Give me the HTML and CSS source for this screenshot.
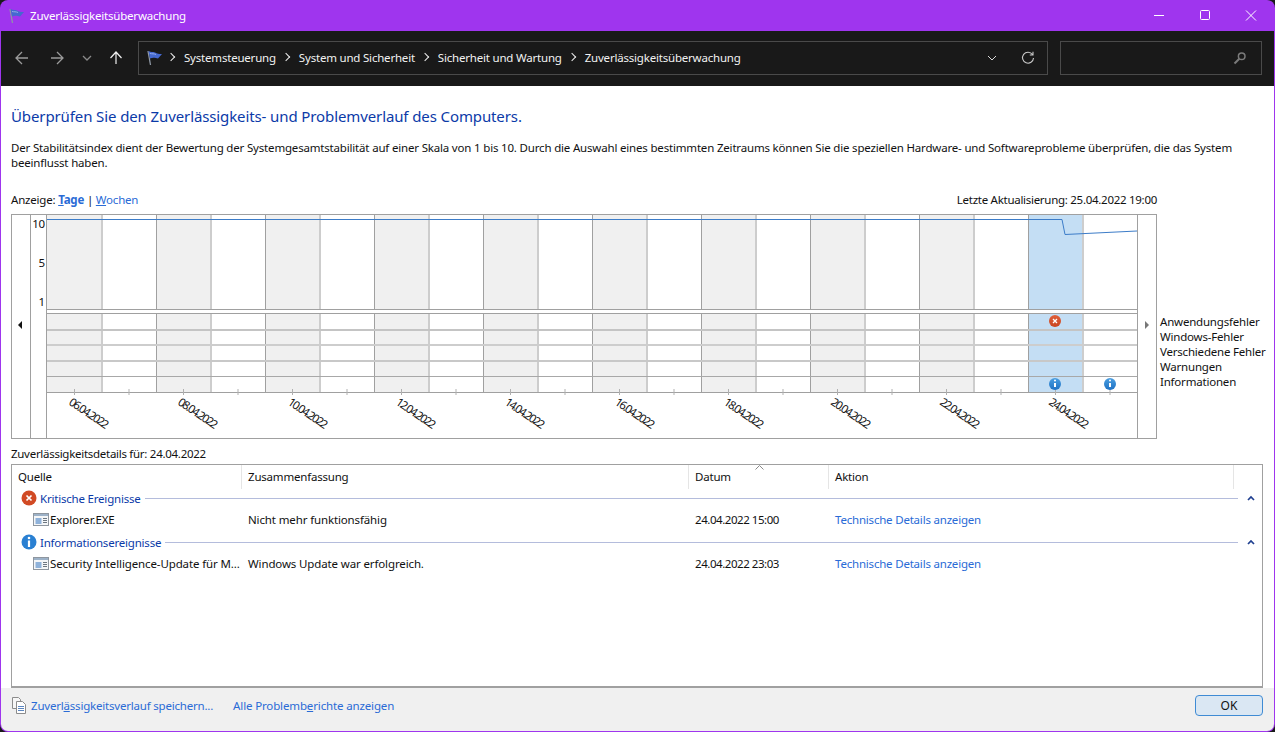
FILE: index.html
```html
<!DOCTYPE html>
<html lang="de">
<head>
<meta charset="utf-8">
<title>Zuverlässigkeitsüberwachung</title>
<link rel="stylesheet" href="styles.css">
</head>
<body>
<div class="window">
  <header class="titlebar">
    <svg class="flag" width="16" height="16" viewBox="0 0 16 16"><path d="M1 1 3.500 15" stroke="#8f98a4" stroke-width="1.300" fill="none"/><path d="M1.500 1C4 2.500 6 1.500 8 2.500 10 3.500 12 4 15 4L11 8.500C9 8.500 7 7 3 8.500Z" fill="#4468d0"/><path d="M3 3.500C5 4 7 3.500 9 4.500" stroke="#93a9ea" fill="none"/></svg>
    <span class="title-text">Zuverlässigkeitsüberwachung</span>
    <div class="win-controls">
      <svg width="46" height="31" viewBox="0 0 46 31"><path d="M18 15.500h10" stroke="#fff" fill="none"/></svg>
      <svg width="46" height="31" viewBox="0 0 46 31"><rect x="18.500" y="10.500" width="9" height="9" rx="1" stroke="#fff" fill="none"/></svg>
      <svg width="46" height="31" viewBox="0 0 46 31"><path d="M18 10.500 28 20.500M28 10.500 18 20.500" stroke="#fff" fill="none"/></svg>
    </div>
  </header>
  <nav class="toolbar">
    <svg class="nav-btn" width="16" height="16" viewBox="0 0 16 16"><path d="M14 8H2.500M8 2 2 8l6 6" stroke="#9b9b9b" stroke-width="1.300" fill="none"/></svg>
    <svg class="nav-btn fwd" width="16" height="16" viewBox="0 0 16 16"><path d="M2 8h11.500M8 2l6 6-6 6" stroke="#9b9b9b" stroke-width="1.300" fill="none"/></svg>
    <svg class="nav-btn down" width="10" height="16" viewBox="0 0 10 16"><path d="M1 6l4 4 4-4" stroke="#8a8a8a" stroke-width="1.300" fill="none"/></svg>
    <svg class="nav-btn up" width="16" height="16" viewBox="0 0 16 16"><path d="M8 14V2.500M2.500 8 8 2l5.500 6" stroke="#f0f0f0" stroke-width="1.200" fill="none"/></svg>
    <div class="address">
      <svg class="flag" width="16" height="16" viewBox="0 0 16 16"><path d="M1 1 3.500 15" stroke="#8f98a4" stroke-width="1.300" fill="none"/><path d="M1.500 1C4 2.500 6 1.500 8 2.500 10 3.500 12 4 15 4L11 8.500C9 8.500 7 7 3 8.500Z" fill="#4468d0"/><path d="M3 3.500C5 4 7 3.500 9 4.500" stroke="#93a9ea" fill="none"/></svg>
      <span class="crumb">Systemsteuerung</span>
      <span class="crumb">System und Sicherheit</span>
      <span class="crumb">Sicherheit und Wartung</span>
      <span class="crumb">Zuverlässigkeitsüberwachung</span>
      <svg class="addr-down" width="10" height="8" viewBox="0 0 10 8"><path d="M1 2l4 4 4-4" stroke="#d8d8d8" fill="none"/></svg>
      <svg class="addr-refresh" width="14" height="14" viewBox="0 0 14 14"><path d="M11.500 3.500A5.500 5.500 0 1 0 12.500 7M12 .800v3.200H8.800" stroke="#c8c8c8" stroke-width="1.100" fill="none"/></svg>
    </div>
    <div class="search">
      <svg width="14" height="14" viewBox="0 0 14 14"><circle cx="8.700" cy="5.300" r="3.300" stroke="#7a7a7a" stroke-width="1.500" fill="none"/><path d="M6.300 7.700 1.500 12.500" stroke="#7a7a7a" stroke-width="2" fill="none"/></svg>
    </div>
  </nav>
  <main class="content">
    <h1 class="heading">Überprüfen Sie den Zuverlässigkeits- und Problemverlauf des Computers.</h1>
    <p class="desc">Der Stabilitätsindex dient der Bewertung der Systemgesamtstabilität auf einer Skala von 1 bis 10. Durch die Auswahl eines bestimmten Zeitraums können Sie die speziellen Hardware- und Softwareprobleme überprüfen, die das System beeinflusst haben.</p>
    <div class="view-row">
      <span>Anzeige: <a class="link strong"><u>T</u>age</a> | <a class="link"><u>W</u>ochen</a></span>
      <span class="tight">Letzte Aktualisierung: 25.04.2022 19:00</span>
    </div>
    <div class="chart-row">
      <div class="chart">
        <div class="chart-prev"><svg width="6" height="8" viewBox="0 0 6 8"><path d="M5 0v8L1 4Z" fill="#111"/></svg></div>
        <div class="axis"><span>10</span><span>5</span><span>1</span></div>
        <svg class="plot" width="1090" height="223" viewBox="47 215 1090 223">
          <defs>
            <pattern id="cols" patternUnits="userSpaceOnUse" x="48" y="0" width="109" height="10">
              <rect x="0" y="0" width="53" height="10" fill="#f0f0f0"/>
              <rect x="53" y="0" width="2" height="10" fill="#cdcdcd"/>
            </pattern>
            <pattern id="rule" patternUnits="userSpaceOnUse" x="47" y="0" width="109" height="10">
              <rect x="0" y="0" width="1" height="10" fill="#a0a0a0"/>
            </pattern>
            <pattern id="ticks" patternUnits="userSpaceOnUse" x="74" y="0" width="54.500" height="10">
              <rect x="0" y="0" width="1" height="10" fill="#b0b0b0"/>
            </pattern>
            <linearGradient id="errGrad" x1="0" y1="0" x2="0" y2="1">
              <stop offset="0" stop-color="#e0603a"/><stop offset="1" stop-color="#c9441f"/>
            </linearGradient>
            <linearGradient id="infoGrad" x1="0" y1="0" x2="0" y2="1">
              <stop offset="0" stop-color="#4a9ee0"/><stop offset="1" stop-color="#1f72c4"/>
            </linearGradient>
          </defs>
          <rect x="47" y="215" width="1" height="94" fill="#f0f0f0"/>
          <rect x="47" y="314" width="1" height="78" fill="#f0f0f0"/>
          <rect x="48" y="215" width="1089" height="94" fill="url(#cols)"/>
          <rect x="48" y="314" width="1089" height="78" fill="url(#cols)"/>
          <rect x="1029" y="215" width="53" height="94" fill="#c4def4"/>
          <rect x="1029" y="314" width="53" height="78" fill="#c4def4"/>
          <rect x="48" y="215" width="1089" height="177" fill="url(#rule)"/>
          <rect x="47" y="309" width="1090" height="1" fill="#a0a0a0"/>
          <rect x="47" y="310" width="1090" height="3" fill="#fff"/>
          <rect x="47" y="313" width="1090" height="1" fill="#a0a0a0"/>
          <rect x="47" y="329" width="1090" height="2" fill="#c4c4c4"/>
          <rect x="47" y="344" width="1090" height="2" fill="#cdcdcd"/>
          <rect x="47" y="360" width="1090" height="2" fill="#c8c8c8"/>
          <rect x="47" y="376" width="1090" height="1" fill="#a8a8a8"/>
          <rect x="47" y="392" width="1090" height="1" fill="#a0a0a0"/>
          <rect x="74" y="389" width="1040" height="6" fill="url(#ticks)"/>
          <path d="M47 219.500H1062L1065 234.500 1137 231" stroke="#3c7cc8" fill="none"/>
          <circle cx="1055" cy="321" r="6" fill="url(#errGrad)"/>
          <path d="M1053 319l4 4M1057 319l-4 4" stroke="#fff" stroke-width="1.300"/>
          <g><circle cx="1055" cy="384" r="6" fill="url(#infoGrad)"/><path d="M1055 383v4" stroke="#fff" stroke-width="2"/><circle cx="1055" cy="380.500" r="1" fill="#fff"/></g>
          <g><circle cx="1110" cy="384" r="6" fill="url(#infoGrad)"/><path d="M1110 383v4" stroke="#fff" stroke-width="2"/><circle cx="1110" cy="380.500" r="1" fill="#fff"/></g>
          <g class="dates">
            <text transform="translate(68 404) rotate(34)">06.04.2022</text>
            <text transform="translate(177 404) rotate(34)">08.04.2022</text>
            <text transform="translate(287 404) rotate(34)">10.04.2022</text>
            <text transform="translate(395 404) rotate(34)">12.04.2022</text>
            <text transform="translate(504 404) rotate(34)">14.04.2022</text>
            <text transform="translate(614 404) rotate(34)">16.04.2022</text>
            <text transform="translate(723 404) rotate(34)">18.04.2022</text>
            <text transform="translate(830 404) rotate(34)">20.04.2022</text>
            <text transform="translate(939 404) rotate(34)">22.04.2022</text>
            <text transform="translate(1048 404) rotate(34)">24.04.2022</text>
          </g>
        </svg>
        <div class="chart-next"><svg width="6" height="8" viewBox="0 0 6 8"><path d="M1 0v8l4-4Z" fill="#777"/></svg></div>
      </div>
      <ul class="legend">
        <li>Anwendungsfehler</li>
        <li>Windows-Fehler</li>
        <li>Verschiedene Fehler</li>
        <li>Warnungen</li>
        <li>Informationen</li>
      </ul>
    </div>
    <div class="details-label tight">Zuverlässigkeitsdetails für: 24.04.2022</div>
    <section class="table">
      <div class="thead">
        <div class="th">Quelle</div>
        <div class="th">Zusammenfassung</div>
        <div class="th sorted">Datum<svg class="sort" width="9" height="5" viewBox="0 0 9 5"><path d="M.500 4.500l4-4 4 4" stroke="#8a8a8a" fill="none"/></svg></div>
        <div class="th">Aktion</div>
      </div>
      <div class="group">
        <svg width="16" height="16" viewBox="0 0 16 16"><circle cx="8" cy="8" r="7.500" fill="#d14a24"/><path d="M5.500 5.500l5 5M10.500 5.500l-5 5" stroke="#fff" stroke-width="1.700"/></svg>
        <span class="group-name">Kritische Ereignisse</span>
        <span class="group-line"></span>
        <svg class="collapse" width="8" height="6" viewBox="0 0 8 6"><path d="M1 5l3-3 3 3" stroke="#1f3f90" stroke-width="1.700" fill="none"/></svg>
      </div>
      <div class="row">
        <div class="cell source">
          <svg width="16" height="13" viewBox="0 0 16 13"><rect x=".5" y=".5" width="15" height="12" fill="#f4f6f8" stroke="#8e969f"/><rect x="1" y="1" width="14" height="2" fill="#9db2c8"/><rect x="2.500" y="5" width="6" height="6" fill="#8fb2da"/><path d="M10 5.500h4M10 7.500h4M10 9.500h4" stroke="#6d7680"/></svg>
          Explorer.EXE
        </div>
        <div class="cell">Nicht mehr funktionsfähig</div>
        <div class="cell date">24.04.2022 15:00</div>
        <div class="cell action"><a class="link">Technische Details anzeigen</a></div>
      </div>
      <div class="group">
        <svg width="16" height="16" viewBox="0 0 16 16"><circle cx="8" cy="8" r="7.500" fill="#2a80d2"/><path d="M8 6.500V13" stroke="#fff" stroke-width="2.200"/><circle cx="8" cy="4" r="1.300" fill="#fff"/></svg>
        <span class="group-name">Informationsereignisse</span>
        <span class="group-line"></span>
        <svg class="collapse" width="8" height="6" viewBox="0 0 8 6"><path d="M1 5l3-3 3 3" stroke="#1f3f90" stroke-width="1.700" fill="none"/></svg>
      </div>
      <div class="row">
        <div class="cell source">
          <svg width="16" height="13" viewBox="0 0 16 13"><rect x=".5" y=".5" width="15" height="12" fill="#f4f6f8" stroke="#8e969f"/><rect x="1" y="1" width="14" height="2" fill="#9db2c8"/><rect x="2.500" y="5" width="6" height="6" fill="#8fb2da"/><path d="M10 5.500h4M10 7.500h4M10 9.500h4" stroke="#6d7680"/></svg>
          Security Intelligence-Update für M...
        </div>
        <div class="cell">Windows Update war erfolgreich.</div>
        <div class="cell date">24.04.2022 23:03</div>
        <div class="cell action"><a class="link">Technische Details anzeigen</a></div>
      </div>
    </section>
  </main>
  <footer class="footer">
    <svg width="14" height="17" viewBox="0 0 14 17"><path d="M.5.500h6l2 2v9h-8Z" fill="#f6f6f6" stroke="#8c8c8c"/><path d="M4.500 4.500h6l3 3v9h-9Z" fill="#fff" stroke="#8c8c8c"/><path d="M6 9.500h6M6 11.500h6M6 13.500h6" stroke="#5c86c0"/></svg>
    <a class="link foot-link">Zuverl<u>ä</u>ssigkeitsverlauf speichern...</a>
    <a class="link foot-link second">Alle Problemb<u>e</u>richte anzeigen</a>
    <button class="ok">OK</button>
  </footer>
</div>
</body>
</html>
```
FILE: styles.css
```css
* { box-sizing: border-box; }
html, body { margin: 0; height: 100%; background: #1a1a1a; overflow: hidden; }
body { font: 11.5px/15px "Noto Sans", "Open Sans", sans-serif; letter-spacing: -0.2px; color: #111; }
a { text-decoration: none; }
svg { flex: none; }
.tight { letter-spacing: -0.28px; }
.window { width: 1275px; height: 732px; display: flex; flex-direction: column; background: #9f35ee; border-radius: 8px; padding: 0 1px 1px; overflow: hidden; }
.titlebar { height: 31px; flex: none; display: flex; align-items: center; padding-left: 9px; color: #fff; margin: 0 -1px; }
.title-text { margin-left: 5px; }
.win-controls { margin-left: auto; display: flex; margin-right: 1px; }
.win-controls svg { display: block; }
.toolbar { height: 55px; flex: none; background: #191919; display: flex; align-items: center; padding: 0 0 1px 13px; }
.nav-btn { margin-right: 19px; }
.nav-btn.fwd { margin-right: 17px; }
.nav-btn.down { margin-right: 16px; }
.nav-btn.up { margin-right: 14px; }
.address { width: 910px; height: 34px; border: 1px solid #4a4a4a; display: flex; align-items: center; padding-left: 8px; color: #f2f2f2; }
.address .flag { margin-right: 2px; }
.crumb { white-space: nowrap; margin: 0 4px 2px 0; display: flex; align-items: center; }
.crumb::before { content: ""; width: 5px; height: 5px; border-top: 1.5px solid #eee; border-right: 1.5px solid #eee; transform: rotate(45deg); margin: 0 10px 0 3px; }
.addr-down { margin-left: auto; }
.addr-refresh { margin: 0 12px 0 24px; }
.search { width: 202px; height: 34px; margin-left: 12px; border: 1px solid #4a4a4a; display: flex; align-items: center; justify-content: flex-end; padding-right: 14px; }
.content { flex: 1; background: #fff; padding: 0 10px; min-height: 0; }
.heading { font-size: 15px; line-height: 20px; font-weight: 400; letter-spacing: -0.11px; color: #0b3aa8; margin: 20px 0 0; }
.desc { margin: 14px 0 0; width: 1235px; line-height: 15px; letter-spacing: -0.18px; }
.view-row { display: flex; justify-content: space-between; width: 1146px; margin-top: 22px; height: 15px; }
.link { color: #2a6bd6; }
.strong { font-weight: 700; }
.chart-row { display: flex; margin-top: 7px; }
.chart { width: 1146px; height: 225px; border: 1px solid #a0a0a0; display: flex; flex: none; }
.chart-prev { width: 19px; border-right: 1px solid #a0a0a0; padding: 106px 0 0 5px; }
.chart-prev svg, .chart-next svg { display: block; }
.axis { width: 16px; border-right: 1px solid #a0a0a0; display: flex; flex-direction: column; align-items: flex-end; gap: 23px; padding: 1px 1px 0 0; }
.axis span { line-height: 16px; height: 16px; }
.plot { display: block; }
.dates text { font: 11.5px "Noto Sans", sans-serif; letter-spacing: -1.5px; fill: #111; }
.chart-next { flex: 1; border-left: 1px solid #a0a0a0; padding: 106px 0 0 6px; }
.legend { list-style: none; margin: 100px 0 0 3px; padding: 0; white-space: nowrap; }
.details-label { margin-top: 7px; height: 15px; }
.table { margin-top: 3px; width: 1252px; height: 224px; border: 1px solid #a0a0a0; border-bottom-width: 2px; }
.thead, .row { display: grid; grid-template-columns: 230px 447px 140px 405px; }
.thead { height: 23px; }
.th { padding-left: 6px; line-height: 24px; border-right: 1px solid #e5e5e5; position: relative; }
.sort { position: absolute; left: 66px; top: 0; }
.group { height: 20px; display: flex; align-items: center; padding-left: 9px; color: #0b3aa8; }
.group-name { margin-left: 3px; white-space: nowrap; }
.group-line { flex: 1; height: 1px; background: #b4bcdc; margin-left: 4px; }
.collapse { margin: 0 7px 0 9px; }
.row { height: 24px; align-items: center; padding-bottom: 2px; }
.cell { padding-left: 6px; white-space: nowrap; overflow: hidden; letter-spacing: -0.13px; }
.cell.source { padding-left: 21px; display: flex; align-items: center; gap: 1px; letter-spacing: -0.12px; }
.cell.date { letter-spacing: -0.45px; }
.cell.action { letter-spacing: -0.2px; }
.footer { height: 43px; flex: none; background: #f0f0f0; display: flex; align-items: center; padding: 0 11px 8px 11px; border-radius: 0 0 7px 7px; }
.foot-link { margin-left: 5px; }
.foot-link.second { margin-left: 20px; letter-spacing: -0.14px; }
.ok { margin-left: auto; width: 68px; height: 21px; background: #dae7f3; border: 1px solid #3f8bd4; border-radius: 4px; font: 12px "Noto Sans", sans-serif; color: #111; padding: 0; }
```
